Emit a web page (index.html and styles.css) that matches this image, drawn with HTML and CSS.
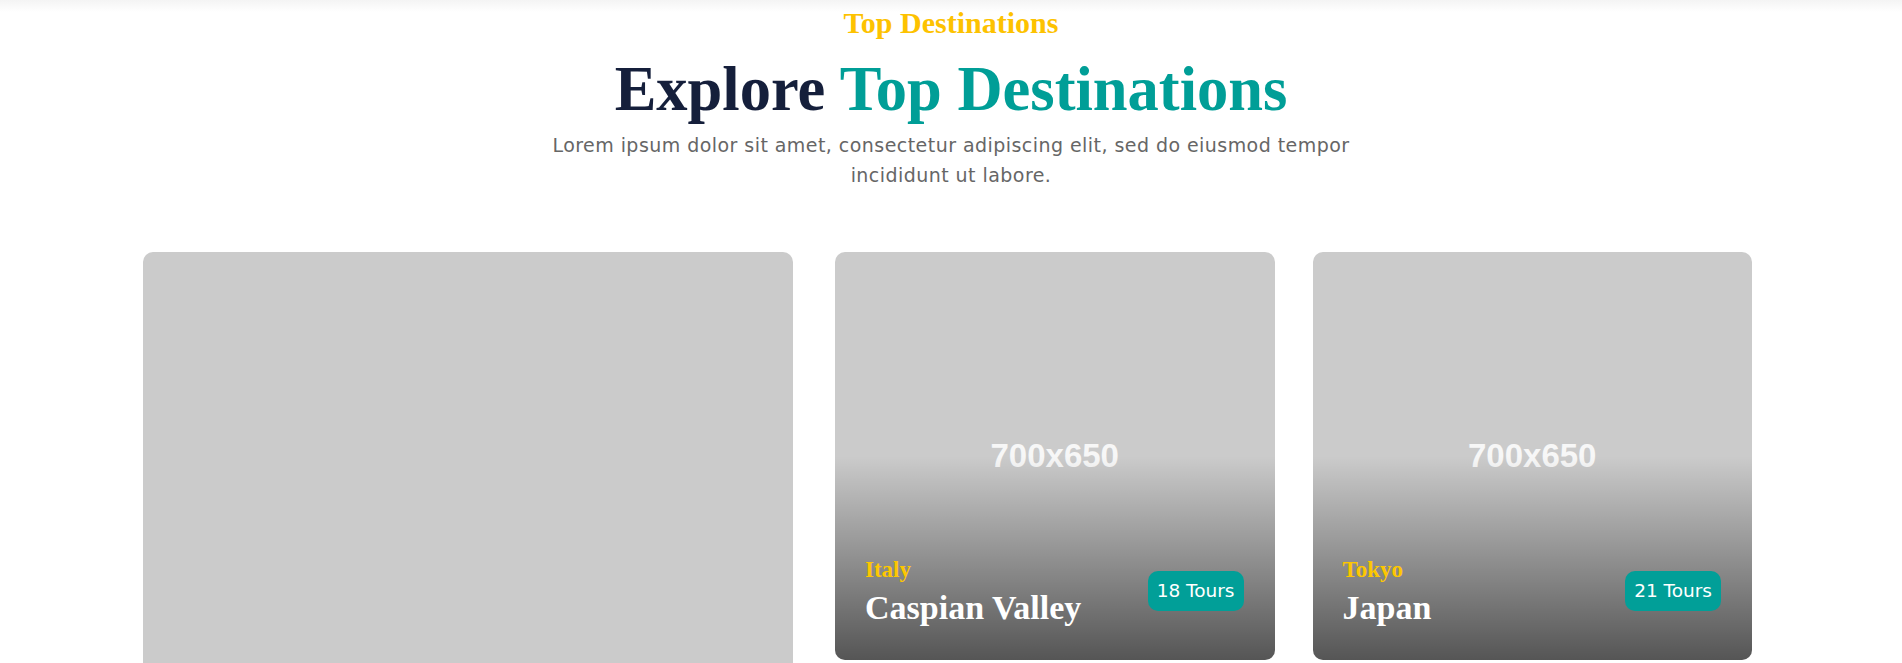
FILE: index.html
```html
<!DOCTYPE html>
<html lang="en">
<head>
<meta charset="utf-8">
<title>Explore Top Destinations</title>
<link rel="stylesheet" href="styles.css">
</head>
<body>
<section class="destinations">
  <div class="section-head">
    <span class="eyebrow">Top Destinations</span>
    <h2 class="title">Explore <span class="accent">Top Destinations</span></h2>
    <p class="lead">Lorem ipsum dolor sit amet, consectetur adipiscing elit, sed do eiusmod tempor incididunt ut labore.</p>
  </div>
  <div class="container">
    <div class="dest-layout">
      <a class="dest-card" href="#">
        <div class="placeholder placeholder--tall"><span>700x925</span></div>
      </a>
      <div class="dest-grid">
        <a class="dest-card" href="#">
          <div class="placeholder"><span>700x650</span></div>
          <div class="dest-info">
            <div class="dest-text">
              <span class="dest-region">Italy</span>
              <h3 class="dest-name">Caspian Valley</h3>
            </div>
            <span class="dest-badge">18 Tours</span>
          </div>
        </a>
        <a class="dest-card" href="#">
          <div class="placeholder"><span>700x650</span></div>
          <div class="dest-info">
            <div class="dest-text">
              <span class="dest-region">Tokyo</span>
              <h3 class="dest-name">Japan</h3>
            </div>
            <span class="dest-badge">21 Tours</span>
          </div>
        </a>
      </div>
    </div>
  </div>
</section>
</body>
</html>
```
FILE: styles.css
```css
::-webkit-scrollbar {
  width: 5px;
}
::-webkit-scrollbar-track {
  background: #f1f1f1;
}
::-webkit-scrollbar-thumb {
  background: #9a9a9a;
  border-left: 3px solid #f1f1f1;
}

html, body {
  margin: 0;
  padding: 0;
  background: #ffffff;
}

body {
  font-family: "DejaVu Sans", "Open Sans", sans-serif;
  color: #5f5f5f;
}

.destinations {
  padding-top: 5px;
  padding-bottom: 120px;
  background: linear-gradient(#f4f4f4 0, #ffffff 12px);
}

.section-head {
  display: flex;
  flex-direction: column;
  align-items: center;
  text-align: center;
}

.eyebrow {
  display: block;
  font-family: "Liberation Serif", "Times New Roman", serif;
  font-weight: 700;
  font-size: 30px;
  line-height: 35px;
  color: #fdc200;
}

.title {
  margin: 12px 0 0;
  font-family: "Liberation Serif", "Times New Roman", serif;
  font-weight: 700;
  font-size: 62.5px;
  line-height: 74px;
  color: #151f3b;
}

.accent {
  color: #009e97;
}

.lead {
  margin: 5px 0 0;
  max-width: 820px;
  font-size: 19px;
  letter-spacing: 0.45px;
  line-height: 29.5px;
  color: #666666;
}

.container {
  padding-right: 7px;
}

.dest-layout {
  width: 1609px;
  margin: 62px auto 0;
  display: grid;
  grid-template-columns: 650px 1fr;
  column-gap: 42px;
  align-items: start;
}

.dest-grid {
  display: grid;
  grid-template-columns: 1fr 1fr;
  column-gap: 38px;
  row-gap: 40px;
  align-items: start;
}

.dest-card {
  position: relative;
  display: block;
  border-radius: 10px;
  overflow: hidden;
  text-decoration: none;
}

.placeholder {
  aspect-ratio: 700 / 650;
  background: #cbcbcb;
  display: flex;
  align-items: center;
  justify-content: center;
  font-family: "Liberation Sans", Arial, sans-serif;
  font-weight: 700;
  font-size: 33px;
  color: #f7f7f7;
}

.placeholder--tall {
  aspect-ratio: 700 / 925;
  font-size: 48px;
}

.dest-card::after {
  content: "";
  position: absolute;
  inset: 0;
  background: linear-gradient(180deg, rgba(0, 0, 0, 0) 50%, rgba(0, 0, 0, 0.58) 100%);
  pointer-events: none;
}

.dest-info {
  position: absolute;
  left: 0;
  right: 0;
  bottom: 0;
  z-index: 1;
  padding: 0 31px 32px 30px;
  display: flex;
  align-items: center;
  justify-content: space-between;
}

.dest-text {
  display: flex;
  flex-direction: column;
  gap: 5px;
}

.dest-region {
  font-family: "Liberation Serif", "Times New Roman", serif;
  font-weight: 700;
  font-size: 23px;
  line-height: 26px;
  color: #fdc700;
}

.dest-name {
  margin: 0;
  font-family: "Liberation Serif", "Times New Roman", serif;
  font-weight: 700;
  font-size: 34px;
  line-height: 40px;
  color: #ffffff;
}

.dest-badge {
  display: inline-block;
  margin-bottom: 3px;
  padding: 0 9px;
  height: 40px;
  line-height: 40px;
  border-radius: 10px;
  background: #019f98;
  color: #ffffff;
  font-size: 18.5px;
}
```
